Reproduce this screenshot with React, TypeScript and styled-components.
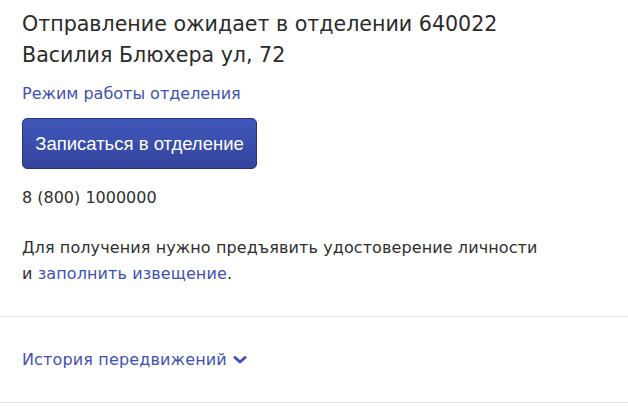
import React from "react";
import styled, { createGlobalStyle } from "styled-components";

const Global = createGlobalStyle`
  html, body { margin: 0; padding: 0; background: #fff; }
  body { font-family: "DejaVu Sans", "Noto Sans", sans-serif; color: #2f2f2f; }
  * { box-sizing: border-box; }
`;

const Page = styled.div`
  width: 628px;
  display: flex;
  flex-direction: column;
`;

const Main = styled.section`
  padding: 9px 22px 29px 22px;
  display: flex;
  flex-direction: column;
  align-items: flex-start;
`;

const Title = styled.h1`
  margin: 0;
  font-size: 20.6px;
  font-weight: 400;
  line-height: 31px;
  color: #2b2b2b;
`;

const Link = styled.a`
  color: #3f51b5;
  text-decoration: none;
  cursor: pointer;
`;

const ScheduleLink = styled(Link)`
  margin-top: 12px;
  font-size: 16px;
  line-height: 22px;
`;

const Button = styled.button`
  margin-top: 13px;
  width: 235px;
  height: 51px;
  border-radius: 5px;
  border: 1px solid #27317c;
  background: linear-gradient(180deg, #4058bb 0%, #34449e 100%);
  color: #fff;
  font-family: "Liberation Sans", Arial, sans-serif;
  font-size: 18.5px;
  padding: 0;
  cursor: pointer;
`;

const Phone = styled.div`
  margin-top: 18px;
  font-size: 16px;
  line-height: 22px;
`;

const Note = styled.p`
  margin: 26px 0 0 0;
  font-size: 16px;
  letter-spacing: 0.1px;
  line-height: 26px;
`;

const Divider = styled.hr`
  margin: 0;
  border: 0;
  height: 1px;
  background: #e3e3e3;
`;

const History = styled.div`
  height: 85px;
  padding: 0 22px;
  display: flex;
  align-items: center;
  gap: 6px;
  font-size: 16px;
  letter-spacing: 0.15px;
`;

const Chevron = () => (
  <svg width="14" height="10" viewBox="0 0 14 10" aria-hidden="true">
    <path d="M2 2.5 L7 7 L12 2.5" fill="none" stroke="#3f51b5" strokeWidth="3" strokeLinecap="round" strokeLinejoin="round" />
  </svg>
);

export default function App() {
  return (
    <Page>
      <Global />
      <Main>
        <Title>
          Отправление ожидает в отделении 640022
          <br />
          Василия Блюхера ул, 72
        </Title>
        <ScheduleLink>Режим работы отделения</ScheduleLink>
        <Button>Записаться в отделение</Button>
        <Phone>8 (800) 1000000</Phone>
        <Note>
          Для получения нужно предъявить удостоверение личности
          <br />
          и <Link>заполнить извещение</Link>.
        </Note>
      </Main>
      <Divider />
      <History>
        <Link>История передвижений</Link>
        <Chevron />
      </History>
      <Divider />
    </Page>
  );
}
